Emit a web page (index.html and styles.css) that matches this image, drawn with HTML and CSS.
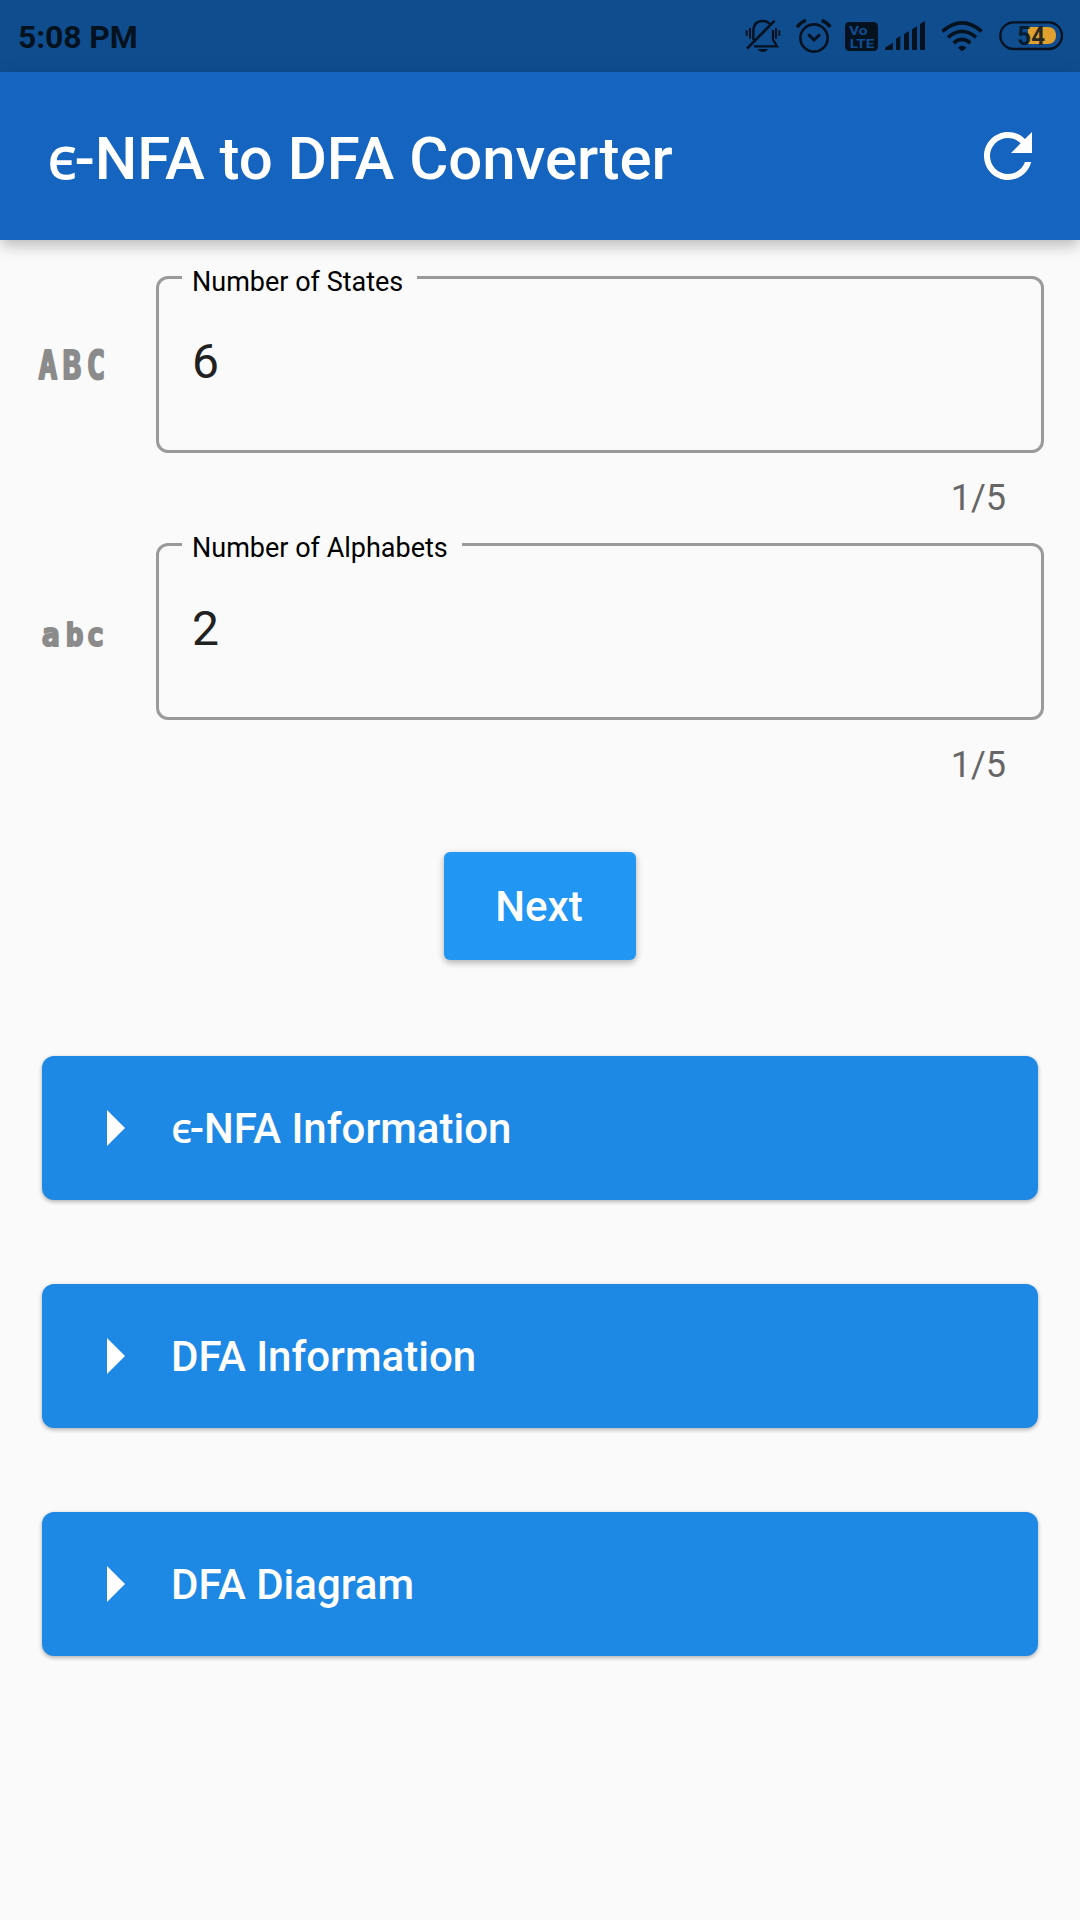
FILE: index.html
```html
<!DOCTYPE html>
<html lang="en">
<head>
<meta charset="utf-8">
<title>ϵ-NFA to DFA Converter</title>
<link rel="stylesheet" href="styles.css">
</head>
<body>
<div class="status-bar">
  <span class="clock">5:08 PM</span>
  <div class="status-icons">
    <svg class="bell" width="36" height="36" viewBox="45 54 108 108">
      <g fill="none" stroke="currentColor" stroke-width="7">
        <path d="M70 121V96C70 75 80 63 98 63C108 63 116 67 120 73"/>
        <path d="M129 90V119L141 139H72"/>
        <path d="M134 62L51 146" stroke-width="8"/>
        <path d="M60 84V116M50 91V107M138 84V116M148 91V107" stroke-width="6"/>
      </g>
      <path d="M83 147H114C111 153 106 156 99 156S86 153 83 147Z" fill="currentColor"/>
    </svg>
    <svg class="alarm" width="37" height="36" viewBox="195 54 111 108">
      <g fill="none" stroke="currentColor" stroke-width="8">
        <circle cx="252" cy="114" r="41"/>
        <path d="M235 103L252 120L270 103" stroke-width="9"/>
        <path d="M201 82C207 73 216 65 228 61M275 61C287 65 295 72 301 81" stroke-width="10"/>
      </g>
    </svg>
    <svg class="volte" width="33" height="36" viewBox="345 54 99 108">
      <rect x="345" y="66" width="99" height="87" rx="13" fill="currentColor"/>
      <g class="volte-text">
        <text x="357" y="104" textLength="56" lengthAdjust="spacingAndGlyphs">Vo</text>
        <text x="359" y="143" textLength="74" lengthAdjust="spacingAndGlyphs">LTE</text>
      </g>
    </svg>
    <svg class="signal" width="40" height="36" viewBox="465 54 120 108">
      <path fill="currentColor" d="M465 150V143L489 128V147Q489 150 486 150ZM498 116L511 108V147Q511 150 508 150H498ZM522 102L537 94V147Q537 150 534 150H525Q522 150 522 147ZM546 88L561 79V147Q561 150 558 150H549Q546 150 546 147ZM570 72L585 63V147Q585 150 582 150H573Q570 150 570 147Z"/>
    </svg>
    <svg class="wifi" width="42" height="36" viewBox="633 54 126 108">
      <g fill="none" stroke="currentColor" stroke-width="11">
        <path d="M637 94Q696 43 755 94"/>
        <path d="M654 112Q696 76 738 112"/>
        <path d="M671 129Q696 107 721 129"/>
      </g>
      <path fill="currentColor" d="M684 143Q696 131 709 143L698 153H694Z"/>
    </svg>
    <svg class="battery" width="64" height="36" viewBox="807 54 192 108">
      <path fill="#e2a02f" d="M894 81H954C970 81 978 92 978 106.500S970 132 954 132H894Z"/>
      <rect x="811" y="67" width="185" height="80" rx="40" fill="none" stroke="currentColor" stroke-width="7"/>
      <text class="battery-text" x="862" y="135" textLength="83" lengthAdjust="spacingAndGlyphs">54</text>
    </svg>
  </div>
</div>

<header class="app-bar">
  <h1 class="title"><span class="epsilon">ϵ</span>-NFA to DFA Converter</h1>
  <svg class="refresh" width="72" height="72" viewBox="0 0 24 24" fill="#fff"><path d="M17.650 6.350C16.200 4.900 14.210 4 12 4c-4.420 0-7.990 3.580-7.990 8s3.570 8 7.990 8c3.730 0 6.840-2.550 7.730-6h-2.080c-.82 2.330-3.040 4-5.650 4-3.310 0-6-2.690-6-6s2.690-6 6-6c1.660 0 3.140.69 4.220 1.780L13 11h7V4l-2.350 2.350z"/></svg>
</header>

<main class="content">
  <div class="field">
    <svg class="case-icon" width="72" height="72" viewBox="0 0 72 72">
      <text class="upper" transform="scale(.8 1)" x="15 45 75" y="50.500">ABC</text>
    </svg>
    <div class="field-body">
      <div class="outline"><label class="label">Number of States</label><span class="value">6</span></div>
      <div class="counter">1/5</div>
    </div>
  </div>
  <div class="field">
    <svg class="case-icon" width="72" height="72" viewBox="0 0 72 72">
      <text class="lower" transform="scale(.92 1)" x="16 42 64.500" y="50.500">abc</text>
    </svg>
    <div class="field-body">
      <div class="outline"><label class="label">Number of Alphabets</label><span class="value">2</span></div>
      <div class="counter">1/5</div>
    </div>
  </div>

  <button class="next">Next</button>

  <div class="panels">
    <div class="panel"><svg class="arrow" width="18" height="36" viewBox="0 0 18 36"><path fill="#fff" d="M0 0L18 18L0 36Z"/></svg><span class="panel-title"><span class="epsilon">ϵ</span>-NFA Information</span></div>
    <div class="panel"><svg class="arrow" width="18" height="36" viewBox="0 0 18 36"><path fill="#fff" d="M0 0L18 18L0 36Z"/></svg><span class="panel-title">DFA Information</span></div>
    <div class="panel"><svg class="arrow" width="18" height="36" viewBox="0 0 18 36"><path fill="#fff" d="M0 0L18 18L0 36Z"/></svg><span class="panel-title">DFA Diagram</span></div>
  </div>
</main>
</body>
</html>
```
FILE: styles.css
```css
* { box-sizing: border-box; }

body {
  margin: 0;
  width: 1080px;
  height: 1920px;
  overflow: hidden;
  background: #fafafa;
  font-family: Roboto, "Noto Sans", sans-serif;
}

svg { display: block; flex: none; }

.status-bar {
  display: flex;
  justify-content: space-between;
  height: 72px;
  padding: 18px 17px 0 18px;
  background: #104d8f;
  color: #041220;
}

.clock {
  font-size: 32px;
  line-height: 38px;
  font-weight: 700;
  letter-spacing: -.15px;
}

.status-icons { display: flex; }
.alarm { margin-left: 14px; }
.volte { margin-left: 13px; }
.signal { margin-left: 7px; }
.wifi { margin-left: 16px; }
.battery { margin-left: 16px; }

.volte-text {
  fill: #104d8f;
  font-size: 38px;
  font-weight: 700;
}

.battery-text {
  fill: #041220;
  fill-opacity: .87;
  font-size: 80px;
  font-weight: 700;
}

.app-bar {
  display: flex;
  align-items: center;
  justify-content: space-between;
  height: 168px;
  padding: 0 36px 0 47px;
  background: #1565c0;
  box-shadow: 0 6px 12px -3px rgba(0, 0, 0, .16), 0 9px 15px rgba(0, 0, 0, .09), 0 3px 24px rgba(0, 0, 0, .05);
}

.title {
  margin: 6px 0 0;
  color: #fff;
  font-size: 60px;
  line-height: 70px;
  font-weight: 500;
  letter-spacing: -.06px;
}

.epsilon { margin-right: -.045em; }

.content {
  display: flex;
  flex-direction: column;
  padding: 36px 36px 0;
}

.field {
  display: flex;
  height: 267px;
}

.case-icon {
  margin: 53px 48px 0 0;
  fill: #8b8b8b;
  stroke: #8b8b8b;
  stroke-width: 2px;
  stroke-linejoin: round;
  font-family: "DejaVu Sans Mono", monospace;
  font-weight: 700;
  text-anchor: middle;
}

.upper { font-size: 39px; }
.lower { font-size: 32px; }

.field-body { flex: 1; }

.outline {
  position: relative;
  height: 177px;
  padding: 55px 33px 0;
  border: 3px solid #9a9a9a;
  border-radius: 12px;
}

.label {
  position: absolute;
  top: -14px;
  left: 23px;
  padding: 0 14px 0 10px;
  background: #fafafa;
  color: #000;
  font-size: 27px;
  line-height: 34px;
  white-space: nowrap;
}

.field + .field .label { top: -15px; }

.value {
  display: block;
  color: #212121;
  font-size: 48px;
  line-height: 56px;
}

.counter {
  padding: 24px 38px 0 0;
  color: #666;
  font-size: 36px;
  line-height: 42px;
  text-align: right;
}

.next {
  align-self: center;
  width: 192px;
  height: 108px;
  margin-top: 42px;
  padding: 2px 2px 0 0;
  border: 0;
  border-radius: 6px;
  background: #2196f3;
  box-shadow: 0 3px 6px rgba(0, 0, 0, .24), 0 1px 9px rgba(0, 0, 0, .08);
  color: #fff;
  font: 500 42px/50px Roboto, sans-serif;
}

.panels {
  display: grid;
  gap: 84px;
  margin: 96px 6px 0;
}

.panel {
  display: flex;
  align-items: center;
  gap: 46px;
  height: 144px;
  padding-left: 65px;
  border-radius: 12px;
  background: #1e88e5;
  box-shadow: 0 2px 4px rgba(0, 0, 0, .22), 0 1px 4px rgba(0, 0, 0, .1);
  color: #fff;
}

.panel-title {
  padding-top: 2px;
  font-size: 42px;
  line-height: 50px;
  font-weight: 500;
}

.panel-title .epsilon { margin-right: -.06em; }
```
